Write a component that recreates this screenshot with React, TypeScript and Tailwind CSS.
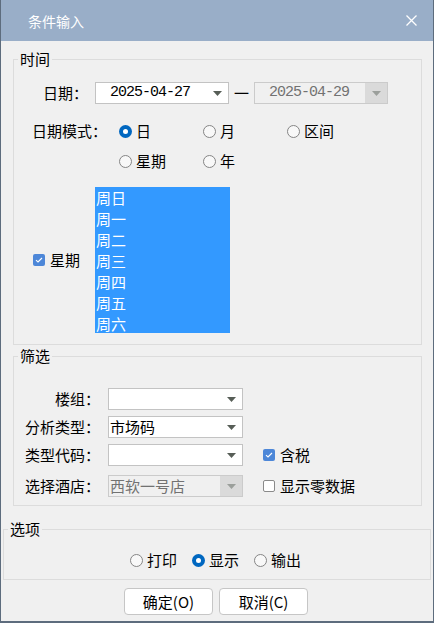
import React from "react";

const weekdays = ["周日", "周一", "周二", "周三", "周四", "周五", "周六"];

function Arrow({ disabled }: { disabled?: boolean }) {
  return (
    <svg width="9" height="5" viewBox="0 0 9 5">
      <polygon points="0,0 9,0 4.5,5" fill={disabled ? "#9b9f9b" : "#575e57"} />
    </svg>
  );
}

function Combo({
  width,
  value,
  disabled,
  mono
}: {
  width: string;
  value?: string;
  disabled?: boolean;
  mono?: boolean;
}) {
  return (
    <div
      className={`flex h-[22px] ${width} items-stretch border ${
        disabled ? "border-[#cbcbcb] bg-[#f0f0f0]" : "border-[#c3c3c3] bg-white"
      }`}
    >
      <span
        className={`flex-1 truncate leading-[20px] ${
          mono
            ? "pl-[14px] font-['Liberation_Mono',monospace] text-[15px] tracking-[-1px]"
            : "pl-px text-[15px]"
        } ${disabled ? "text-[#727272]" : "text-black"}`}
      >
        {value}
      </span>
      <span className={`flex w-[22px] items-center justify-center ${disabled ? "bg-[#dadada]" : ""}`}>
        <Arrow disabled={disabled} />
      </span>
    </div>
  );
}

function Radio({ checked, label }: { checked?: boolean; label: string }) {
  return (
    <span className="flex items-center gap-[4px]">
      {checked ? (
        <span className="grid size-[13px] place-items-center rounded-full bg-[#0067c0]">
          <span className="size-[5px] rounded-full bg-white" />
        </span>
      ) : (
        <span className="size-[13px] rounded-full border border-[#858585] bg-[#f8f8f8]" />
      )}
      <span className="leading-[20px]">{label}</span>
    </span>
  );
}

function Check({ checked, label }: { checked?: boolean; label: string }) {
  return (
    <span className="flex items-center gap-[5px]">
      {checked ? (
        <span className="grid size-[12px] place-items-center rounded-[2px] bg-[#4d87d8]">
          <svg width="8" height="6" viewBox="0 0 8 6">
            <path d="M1 3.2 L3 5 L7 1" fill="none" stroke="white" strokeWidth="1.1" />
          </svg>
        </span>
      ) : (
        <span className="size-[12px] rounded-[2px] border border-[#8a8a8a] bg-white" />
      )}
      <span className="leading-[20px]">{label}</span>
    </span>
  );
}

function FilterRow({
  label,
  value,
  disabled,
  children,
  className
}: {
  label: string;
  value?: string;
  disabled?: boolean;
  children?: React.ReactNode;
  className: string;
}) {
  return (
    <div className={`flex h-[22px] items-center ${className}`}>
      <span className="w-[86px] text-right leading-[20px]">{label}</span>
      <div className="ml-[8px]">
        <Combo width="w-[135px]" value={value} disabled={disabled} />
      </div>
      {children && <div className="ml-[20px]">{children}</div>}
    </div>
  );
}

export default function App() {
  return (
    <div className="flex h-[623px] w-[434px] flex-col border-x border-b-2 border-[#5d6c7d] bg-[#f0f0f0] font-['Noto_Sans_CJK_SC','Liberation_Sans',sans-serif] text-[15px] text-black">
      <div className="flex h-[41px] shrink-0 items-center justify-between bg-[#99aec8] pl-[27px] pr-[16px]">
        <span className="text-[14px] leading-none text-white">条件输入</span>
        <svg width="11" height="11" viewBox="0 0 11 11">
          <path d="M0.5 0.5 L10.5 10.5 M10.5 0.5 L0.5 10.5" stroke="white" strokeWidth="1.3" />
        </svg>
      </div>

      <fieldset className="ml-[12px] mt-[8px] w-[409px] border border-[#dcdcdc] pb-[11px]">
        <legend className="ml-[4px] px-[2px] leading-[20px]">时间</legend>

        <div className="mt-[13px] flex h-[22px] items-center">
          <span className="ml-[29px] w-[52px] leading-[20px]">日期：</span>
          <Combo width="w-[134px]" value="2025-04-27" mono />
          <span className="w-[25px] text-center leading-[20px]">一</span>
          <Combo width="w-[134px]" value="2025-04-29" mono disabled />
        </div>

        <div className="mt-[17px] flex h-[20px] items-center">
          <span className="ml-[18px] w-[87px] leading-[20px]">日期模式：</span>
          <div className="w-[84px]">
            <Radio checked label="日" />
          </div>
          <div className="w-[84px]">
            <Radio label="月" />
          </div>
          <Radio label="区间" />
        </div>

        <div className="ml-[105px] mt-[10px] flex h-[20px] items-center">
          <div className="w-[84px]">
            <Radio label="星期" />
          </div>
          <Radio label="年" />
        </div>

        <div className="mt-[16px] flex items-center">
          <div className="ml-[19px] w-[62px]">
            <Check checked label="星期" />
          </div>
          <div className="h-[146px] w-[135px] bg-[#3399ff]">
            {weekdays.map((d) => (
              <div key={d} className="pl-px leading-[21px] text-white">
                {d}
              </div>
            ))}
          </div>
        </div>
      </fieldset>

      <fieldset className="ml-[12px] mt-[1px] w-[409px] border border-[#dcdcdc] pb-[8px]">
        <legend className="ml-[4px] px-[2px] leading-[20px]">筛选</legend>
        <FilterRow className="mt-[22px]" label="楼组：" />
        <FilterRow className="mt-[6px]" label="分析类型：" value="市场码" />
        <FilterRow className="mt-[6px]" label="类型代码：">
          <Check checked label="含税" />
        </FilterRow>
        <FilterRow className="mt-[9px]" label="选择酒店：" value="西软一号店" disabled>
          <Check label="显示零数据" />
        </FilterRow>
      </fieldset>

      <fieldset className="ml-[2px] mt-[13px] w-[428px] border border-[#dcdcdc] pb-[9px]">
        <legend className="ml-[4px] px-[2px] leading-[20px]">选项</legend>
        <div className="ml-[126px] mt-[11px] flex h-[20px] items-center gap-[15px]">
          <Radio label="打印" />
          <Radio checked label="显示" />
          <Radio label="输出" />
        </div>
      </fieldset>

      <div className="ml-[123px] mt-[8px] flex gap-[6px]">
        <button
          type="button"
          className="h-[27px] w-[89px] rounded-[4px] border border-[#c6c6c6] bg-white text-[15px] leading-[20px]"
        >
          确定(O)
        </button>
        <button
          type="button"
          className="h-[27px] w-[89px] rounded-[4px] border border-[#c6c6c6] bg-white text-[15px] leading-[20px]"
        >
          取消(C)
        </button>
      </div>
    </div>
  );
}
